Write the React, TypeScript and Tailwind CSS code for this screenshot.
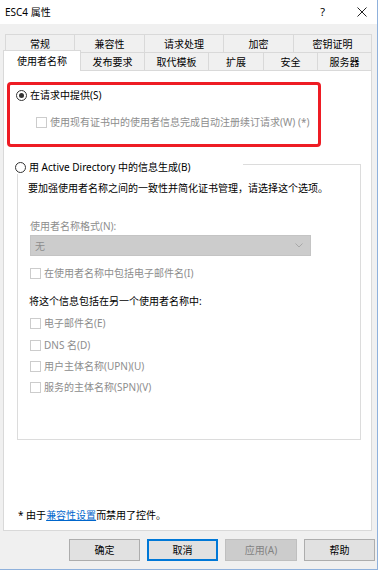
import React from "react";

const FONT = { fontFamily: '"Noto Sans", "Noto Sans CJK SC", sans-serif' };

const BACK_TABS = [
  { label: "常规", w: "w-[69px]" },
  { label: "兼容性", w: "w-[70px]" },
  { label: "请求处理", w: "w-[79px]" },
  { label: "加密", w: "w-[70px]" },
  { label: "密钥证明", w: "w-[78px]" },
];

const FRONT_TABS = [
  { label: "发布要求", w: "w-[63px]" },
  { label: "取代模板", w: "w-[64px]" },
  { label: "扩展", w: "w-[55px]" },
  { label: "安全", w: "w-[54px]" },
  { label: "服务器", w: "w-[54px]" },
];

/* disabled checkbox, the only kind on this page */
const Check = ({ label, className = "" }: { label: string; className?: string }) => (
  <div className={`flex h-[14px] items-center ${className}`}>
    <span className="box-border h-[11px] w-[11px] border border-[#cccccc] bg-white" />
    <span className="ml-[3px] leading-[14px] text-[#8d8d8d]">{label}</span>
  </div>
);

const Radio = ({ checked }: { checked?: boolean }) => (
  <span className="box-border flex h-[11px] w-[11px] items-center justify-center rounded-full border border-[#333333] bg-white">
    {checked && <span className="h-[5px] w-[5px] rounded-full bg-[#333333]" />}
  </span>
);

export default function App() {
  return (
    <div className="h-[573px] w-[381px] overflow-hidden bg-white text-[10px] text-black" style={FONT}>
      <div className="box-border flex h-[570px] w-[378px] flex-col border-b border-r border-[#8fb1dc] bg-[#f0f0f0]">
        {/* title bar */}
        <div className="flex h-[24px] items-center bg-white pl-[5px]">
          <span className="leading-[14px]">ESC4 属性</span>
          <span className="ml-auto text-[11px] leading-[14px]">?</span>
          <svg className="ml-[32px] mr-[10px]" width="10" height="10" viewBox="0 0 10 10">
            <path d="M0.5 0.5L9.5 9.5M9.5 0.5L0.5 9.5" stroke="#222" strokeWidth="1" />
          </svg>
        </div>

        {/* tabs */}
        <div className="mt-[10px] flex pl-[5px]">
          <div className="flex border-r border-[#d9d9d9]">
            {BACK_TABS.map(t => (
              <div
                key={t.label}
                className={`box-border flex h-[18px] items-center justify-center border-l border-t border-[#d9d9d9] ${t.w}`}
              >
                <span className="leading-[14px]">{t.label}</span>
              </div>
            ))}
          </div>
        </div>
        <div className="relative z-10 -mt-[2px] flex h-[20px] items-end pl-[3px]">
          <div className="box-border flex h-[21px] w-[78px] -mb-px items-start justify-center border-l border-r border-t border-[#d9d9d9] bg-white pt-[3px]">
            <span className="leading-[14px]">使用者名称</span>
          </div>
          <div className="flex border-r border-[#d9d9d9]">
            {FRONT_TABS.map((t, i) => (
              <div
                key={t.label}
                className={`box-border flex h-[18px] items-center justify-center border-t border-[#d9d9d9] ${i > 0 ? "border-l" : ""} ${t.w}`}
              >
                <span className="leading-[14px]">{t.label}</span>
              </div>
            ))}
          </div>
        </div>

        {/* page */}
        <div className="relative ml-[3px] box-border flex h-[461px] w-[369px] flex-col border border-[#d9d9d9] bg-white">
          <div className="ml-[12px] mt-[17px] flex h-[14px] items-center">
            <Radio checked />
            <span className="ml-[3px] leading-[14px]">在请求中提供(S)</span>
          </div>
          <Check className="ml-[32px] mt-[13px]" label="使用现有证书中的使用者信息完成自动注册续订请求(W) (*)" />

          <fieldset className="ml-[13px] mt-[25px] box-border w-[344px] border border-[#dcdcdc] px-0 pb-[45px]">
            <legend className="-ml-[3px] flex h-[20px] w-[228px] items-end bg-white">
              <div className="flex h-[14px] items-center">
                <Radio />
                <span className="ml-[3px] leading-[14px]">用 Active Directory 中的信息生成(B)</span>
              </div>
            </legend>
            <div className="flex flex-col pl-[12px]">
              <div className="-ml-[2px] mt-[7px] h-[14px] leading-[14px]">
                要加强使用者名称之间的一致性并简化证书管理，请选择这个选项。
              </div>
              <div className="mt-[24px] h-[14px] leading-[14px] text-[#8d8d8d]">使用者名称格式(N):</div>
              <div className="mt-[2px] box-border flex h-[21px] w-[281px] items-center border border-[#c4c4c4] bg-[#cccccc] pl-[4px] pr-[7px]">
                <span className="leading-[14px] text-[#8d8d8d]">无</span>
                <svg className="ml-auto" width="8" height="5" viewBox="0 0 8 5">
                  <path d="M0.5 0.5L4 4L7.5 0.5" fill="none" stroke="#a8a8a8" strokeWidth="1" />
                </svg>
              </div>
              <Check className="mt-[10px]" label="在使用者名称中包括电子邮件名(I)" />
              <div className="-ml-[1px] mt-[14px] h-[14px] leading-[14px]">将这个信息包括在另一个使用者名称中:</div>
              <Check className="mt-[8px]" label="电子邮件名(E)" />
              <Check className="mt-[8px]" label="DNS 名(D)" />
              <Check className="mt-[7px]" label="用户主体名称(UPN)(U)" />
              <Check className="mt-[7px]" label="服务的主体名称(SPN)(V)" />
            </div>
          </fieldset>

          <div className="mb-[8px] ml-[14px] mt-auto h-[14px] leading-[14px]">
            * 由于<span className="text-[#0066cc] underline">兼容性设置</span>而禁用了控件。
          </div>

          {/* red highlight drawn over the first option */}
          <div className="pointer-events-none absolute left-[3px] top-[11px] box-border h-[65px] w-[314px] rounded-[4px] border-[3px] border-[#ee1c24]" />
        </div>

        {/* buttons */}
        <div className="mt-[8px] flex pl-[69px]">
          <button className="box-border flex h-[22px] w-[71px] items-center justify-center border border-[#adadad] bg-[#e1e1e1] leading-[14px]">确定</button>
          <button className="ml-[7px] box-border flex h-[22px] w-[71px] items-center justify-center border-2 border-[#0078d7] bg-[#e1e1e1] leading-[14px]">取消</button>
          <button className="ml-[7px] box-border flex h-[22px] w-[72px] items-center justify-center border border-[#bfbfbf] bg-[#cccccc] leading-[14px] text-[#838383]">应用(A)</button>
          <button className="ml-[7px] box-border flex h-[22px] w-[71px] items-center justify-center border border-[#adadad] bg-[#e1e1e1] leading-[14px]">帮助</button>
        </div>
      </div>
    </div>
  );
}
